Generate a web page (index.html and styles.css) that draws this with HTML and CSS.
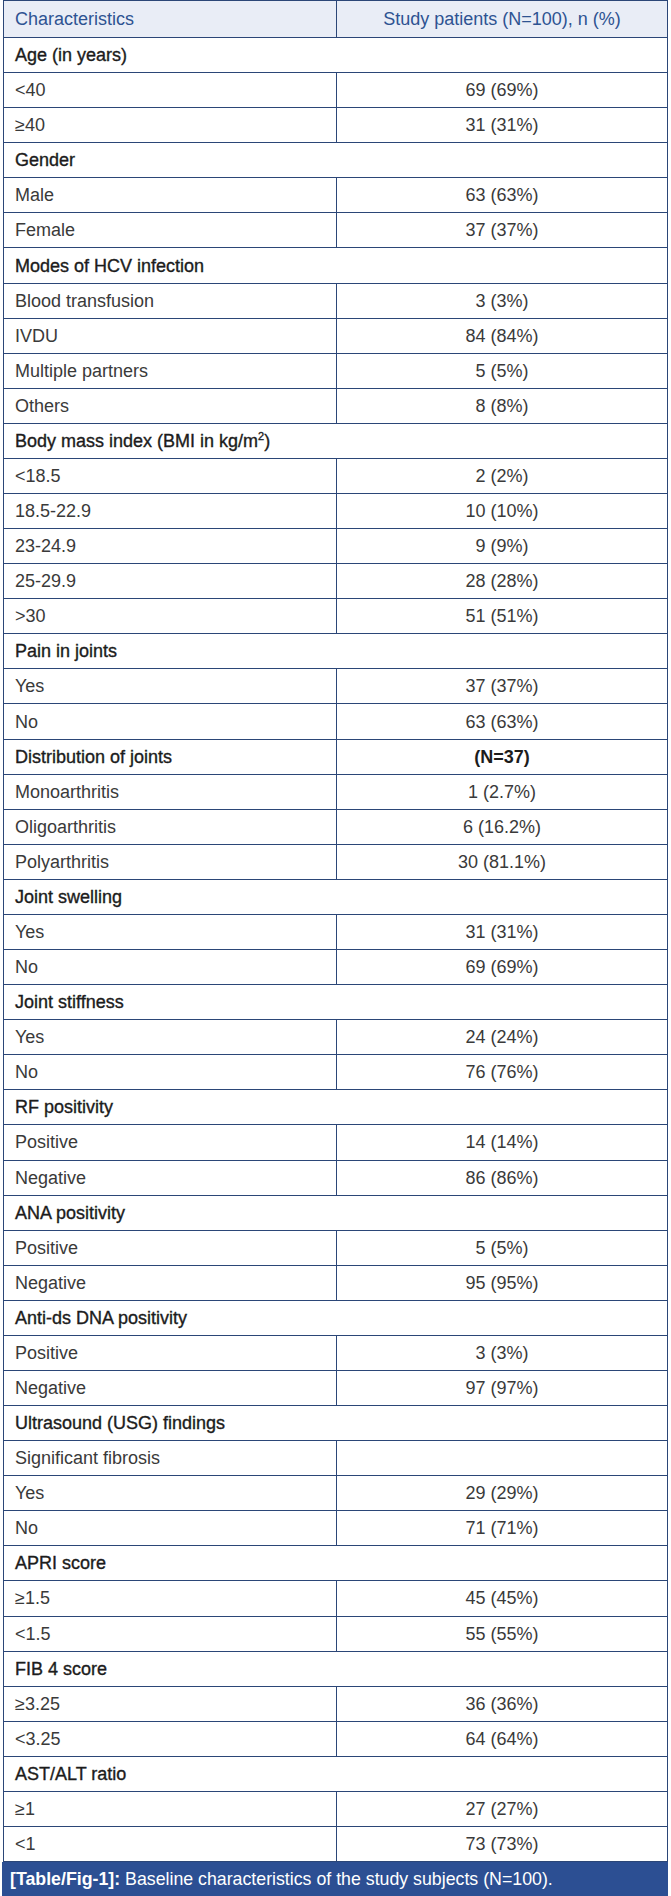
FILE: index.html
```html
<!DOCTYPE html>
<html lang="en">
<head>
<meta charset="utf-8">
<title>Table/Fig-1</title>
<link rel="stylesheet" href="styles.css">
</head>
<body>
<div class="figure">
<table class="data">
<colgroup><col class="c1"><col class="c2"></colgroup>
<thead>
<tr class="head"><th class="lab">Characteristics</th><th class="val">Study patients (N=100), n (%)</th></tr>
</thead>
<tbody>
<tr class="grp"><td colspan="2">Age (in years)</td></tr>
<tr><td class="lab">&lt;40</td><td class="val">69 (69%)</td></tr>
<tr><td class="lab">≥40</td><td class="val">31 (31%)</td></tr>
<tr class="grp"><td colspan="2">Gender</td></tr>
<tr><td class="lab">Male</td><td class="val">63 (63%)</td></tr>
<tr><td class="lab">Female</td><td class="val">37 (37%)</td></tr>
<tr class="grp"><td colspan="2">Modes of HCV infection</td></tr>
<tr><td class="lab">Blood transfusion</td><td class="val">3 (3%)</td></tr>
<tr><td class="lab">IVDU</td><td class="val">84 (84%)</td></tr>
<tr><td class="lab">Multiple partners</td><td class="val">5 (5%)</td></tr>
<tr><td class="lab">Others</td><td class="val">8 (8%)</td></tr>
<tr class="grp"><td colspan="2">Body mass index (BMI in kg/m<sup>2</sup>)</td></tr>
<tr><td class="lab">&lt;18.5</td><td class="val">2 (2%)</td></tr>
<tr><td class="lab">18.5-22.9</td><td class="val">10 (10%)</td></tr>
<tr><td class="lab">23-24.9</td><td class="val">9 (9%)</td></tr>
<tr><td class="lab">25-29.9</td><td class="val">28 (28%)</td></tr>
<tr><td class="lab">&gt;30</td><td class="val">51 (51%)</td></tr>
<tr class="grp"><td colspan="2">Pain in joints</td></tr>
<tr><td class="lab">Yes</td><td class="val">37 (37%)</td></tr>
<tr><td class="lab">No</td><td class="val">63 (63%)</td></tr>
<tr class="grp"><td class="lab">Distribution of joints</td><td class="val">(N=37)</td></tr>
<tr><td class="lab">Monoarthritis</td><td class="val">1 (2.7%)</td></tr>
<tr><td class="lab">Oligoarthritis</td><td class="val">6 (16.2%)</td></tr>
<tr><td class="lab">Polyarthritis</td><td class="val">30 (81.1%)</td></tr>
<tr class="grp"><td colspan="2">Joint swelling</td></tr>
<tr><td class="lab">Yes</td><td class="val">31 (31%)</td></tr>
<tr><td class="lab">No</td><td class="val">69 (69%)</td></tr>
<tr class="grp"><td colspan="2">Joint stiffness</td></tr>
<tr><td class="lab">Yes</td><td class="val">24 (24%)</td></tr>
<tr><td class="lab">No</td><td class="val">76 (76%)</td></tr>
<tr class="grp"><td colspan="2">RF positivity</td></tr>
<tr><td class="lab">Positive</td><td class="val">14 (14%)</td></tr>
<tr><td class="lab">Negative</td><td class="val">86 (86%)</td></tr>
<tr class="grp"><td colspan="2">ANA positivity</td></tr>
<tr><td class="lab">Positive</td><td class="val">5 (5%)</td></tr>
<tr><td class="lab">Negative</td><td class="val">95 (95%)</td></tr>
<tr class="grp"><td colspan="2">Anti-ds DNA positivity</td></tr>
<tr><td class="lab">Positive</td><td class="val">3 (3%)</td></tr>
<tr><td class="lab">Negative</td><td class="val">97 (97%)</td></tr>
<tr class="grp"><td colspan="2">Ultrasound (USG) findings</td></tr>
<tr><td class="lab">Significant fibrosis</td><td class="val"></td></tr>
<tr><td class="lab">Yes</td><td class="val">29 (29%)</td></tr>
<tr><td class="lab">No</td><td class="val">71 (71%)</td></tr>
<tr class="grp"><td colspan="2">APRI score</td></tr>
<tr><td class="lab">≥1.5</td><td class="val">45 (45%)</td></tr>
<tr><td class="lab">&lt;1.5</td><td class="val">55 (55%)</td></tr>
<tr class="grp"><td colspan="2">FIB 4 score</td></tr>
<tr><td class="lab">≥3.25</td><td class="val">36 (36%)</td></tr>
<tr><td class="lab">&lt;3.25</td><td class="val">64 (64%)</td></tr>
<tr class="grp"><td colspan="2">AST/ALT ratio</td></tr>
<tr><td class="lab">≥1</td><td class="val">27 (27%)</td></tr>
<tr><td class="lab">&lt;1</td><td class="val">73 (73%)</td></tr>
</tbody>
</table>
<div class="caption"><b>[Table/Fig-1]:</b> Baseline characteristics of the study subjects (N=100).</div>
</div>
</body>
</html>
```
FILE: styles.css
```css
html, body {
  margin: 0;
  padding: 0;
  background: #ffffff;
}
body {
  font-family: "Liberation Sans", Arial, sans-serif;
  font-size: 18px;
  color: #3a3a3a;
}
.figure {
  width: 666px;
  padding-left: 2px;
}
.data {
  border-collapse: collapse;
  width: 664px;
  margin-left: 1px;
  table-layout: fixed;
}
.data col.c1 { width: 333px; }
.data col.c2 { width: 331px; }
.data th, .data td {
  border: 1px solid #2b4677;
  padding: 0 0 0 11px;
  height: 35.08px;
  box-sizing: border-box;
  vertical-align: middle;
  text-align: left;
  line-height: 20px;
  font-weight: normal;
}
.data .val {
  text-align: center;
  padding: 0;
}
.head th {
  height: 37px;
  background: #e9edf6;
  color: #2e5392;
}
.grp td {
  color: #1c1c1c;
  -webkit-text-stroke: 0.35px #1c1c1c;
}
.grp td.val {
  color: #1c1c1c;
  font-weight: bold;
  -webkit-text-stroke: 0;
}
.data sup {
  font-size: 11px;
  line-height: 0;
  vertical-align: 7px;
}
.caption {
  background: #2c4f93;
  color: #ffffff;
  height: 35px;
  line-height: 35px;
  padding-left: 8px;
  font-size: 17.75px;
  margin-top: 0;
}
.caption b {
  font-weight: bold;
}
```
